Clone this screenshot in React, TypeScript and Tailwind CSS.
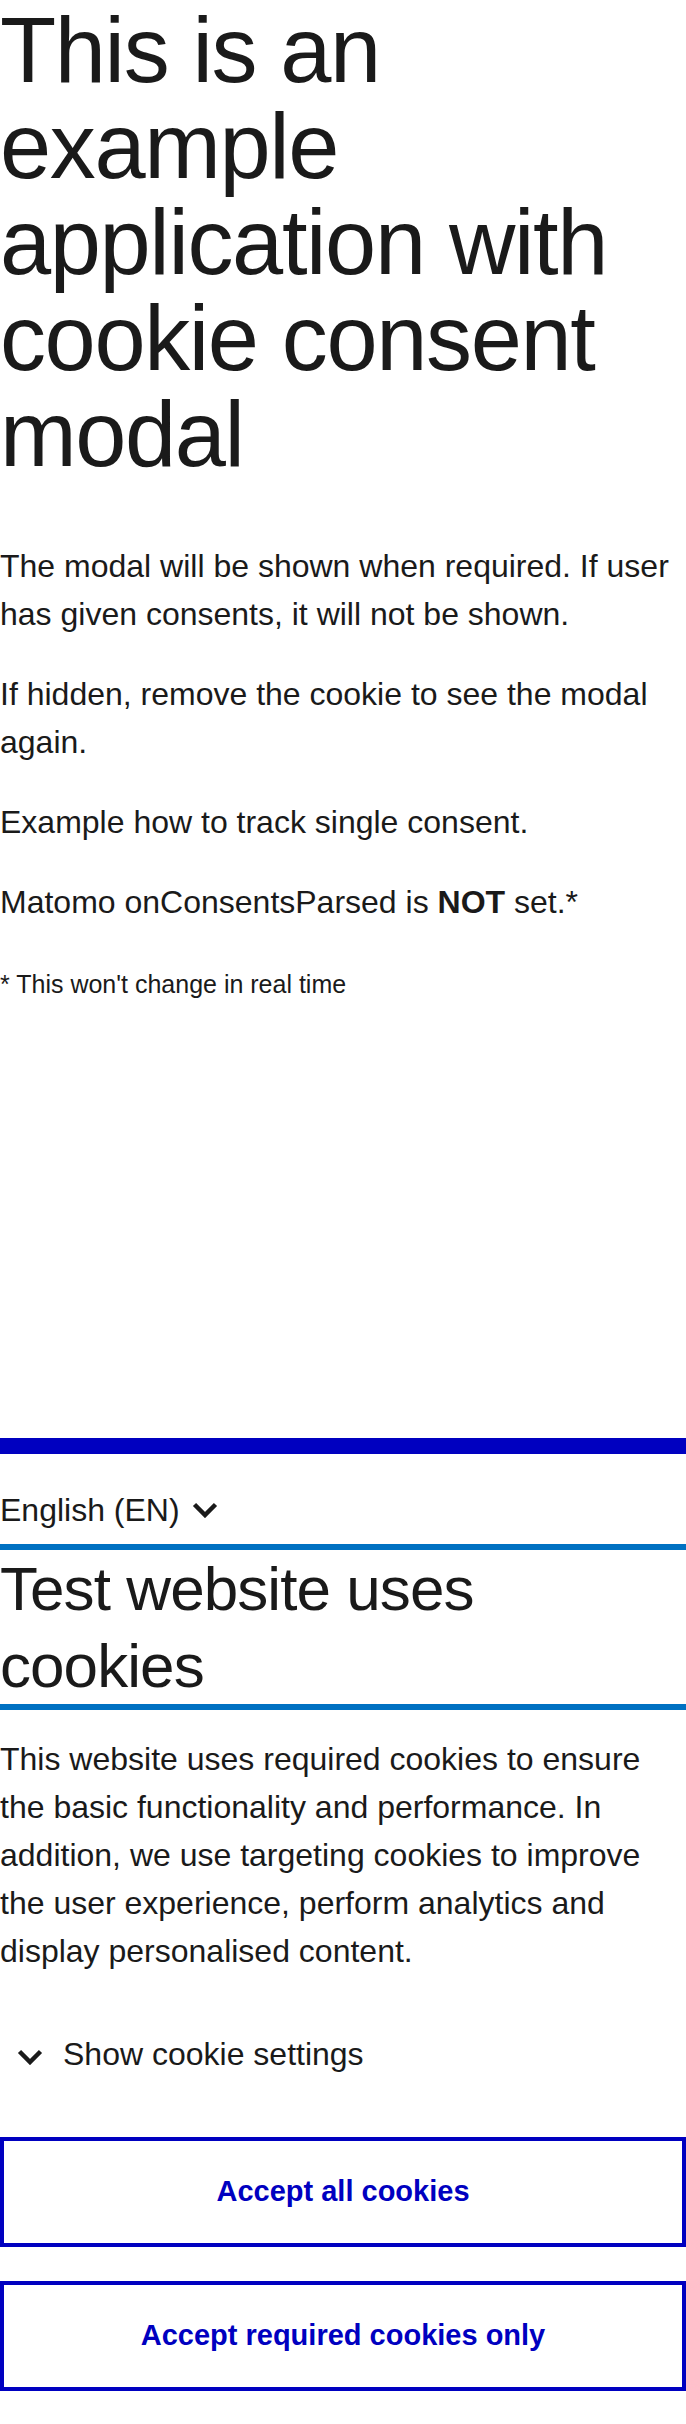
import React from 'react';

const BLUE = '#0000c0';

function Chevron() {
  return (
    <svg width="26" height="16" viewBox="0 0 26 16" fill="none" className="shrink-0">
      <polyline points="2.5,2.5 13,13 23.5,2.5" stroke="#1a1a1a" strokeWidth="4.5" strokeLinejoin="miter" />
    </svg>
  );
}

export default function App() {
  return (
    <div
      className="min-h-screen flex flex-col bg-white text-[#1a1a1a]"
      style={{ fontFamily: '"Liberation Sans", Arial, sans-serif' }}
    >
      {/* Page content */}
      <main>
        <h1 className="pt-[2px] text-[92px] leading-[96px] tracking-[-0.015em] font-normal">
          This is an example application with cookie consent modal
        </h1>
        <div className="mt-[60px] text-[32px] leading-[48px]">
          <p className="mb-[32px]">The modal will be shown when required. If user has given consents, it will not be shown.</p>
          <p className="mb-[32px]">If hidden, remove the cookie to see the modal again.</p>
          <p className="mb-[32px]">Example how to track single consent.</p>
          <p className="mb-[32px]">
            Matomo onConsentsParsed is <strong className="font-bold">NOT</strong> set.*
          </p>
        </div>
        <p className="text-[25px] leading-[52px]">* This won't change in real time</p>
      </main>

      {/* Cookie consent modal */}
      <section className="mt-auto border-t-[16px] border-[#0000c0] pb-[33px]">
        <div className="pt-[32px] pb-[10px] border-b-[6px] border-[#0071c2]">
          <button className="flex items-center gap-[12px] text-[32px] leading-[48px]">
            English (EN)
            <Chevron />
          </button>
        </div>
        <h2 className="text-[62px] leading-[77px] tracking-[-0.015em] font-normal border-b-[6px] border-[#0071c2]">
          Test website uses cookies
        </h2>
        <p className="mt-[25px] text-[32px] leading-[48px]">
          This website uses required cookies to ensure the basic functionality and performance. In addition, we use
          targeting cookies to improve the user experience, perform analytics and display personalised content.
        </p>
        <button className="mt-[55px] flex items-center gap-[20px] pl-[17px] text-[32px] leading-[48px]">
          <span className="mt-[5px]">
            <Chevron />
          </span>
          Show cookie settings
        </button>
        <div className="mt-[59px] flex flex-col gap-[34px]">
          <button
            className="h-[110px] w-full border-[4px] bg-white text-[29px] font-bold"
            style={{ borderColor: BLUE, color: BLUE }}
          >
            Accept all cookies
          </button>
          <button
            className="h-[110px] w-full border-[4px] bg-white text-[29px] font-bold"
            style={{ borderColor: BLUE, color: BLUE }}
          >
            Accept required cookies only
          </button>
        </div>
      </section>
    </div>
  );
}
